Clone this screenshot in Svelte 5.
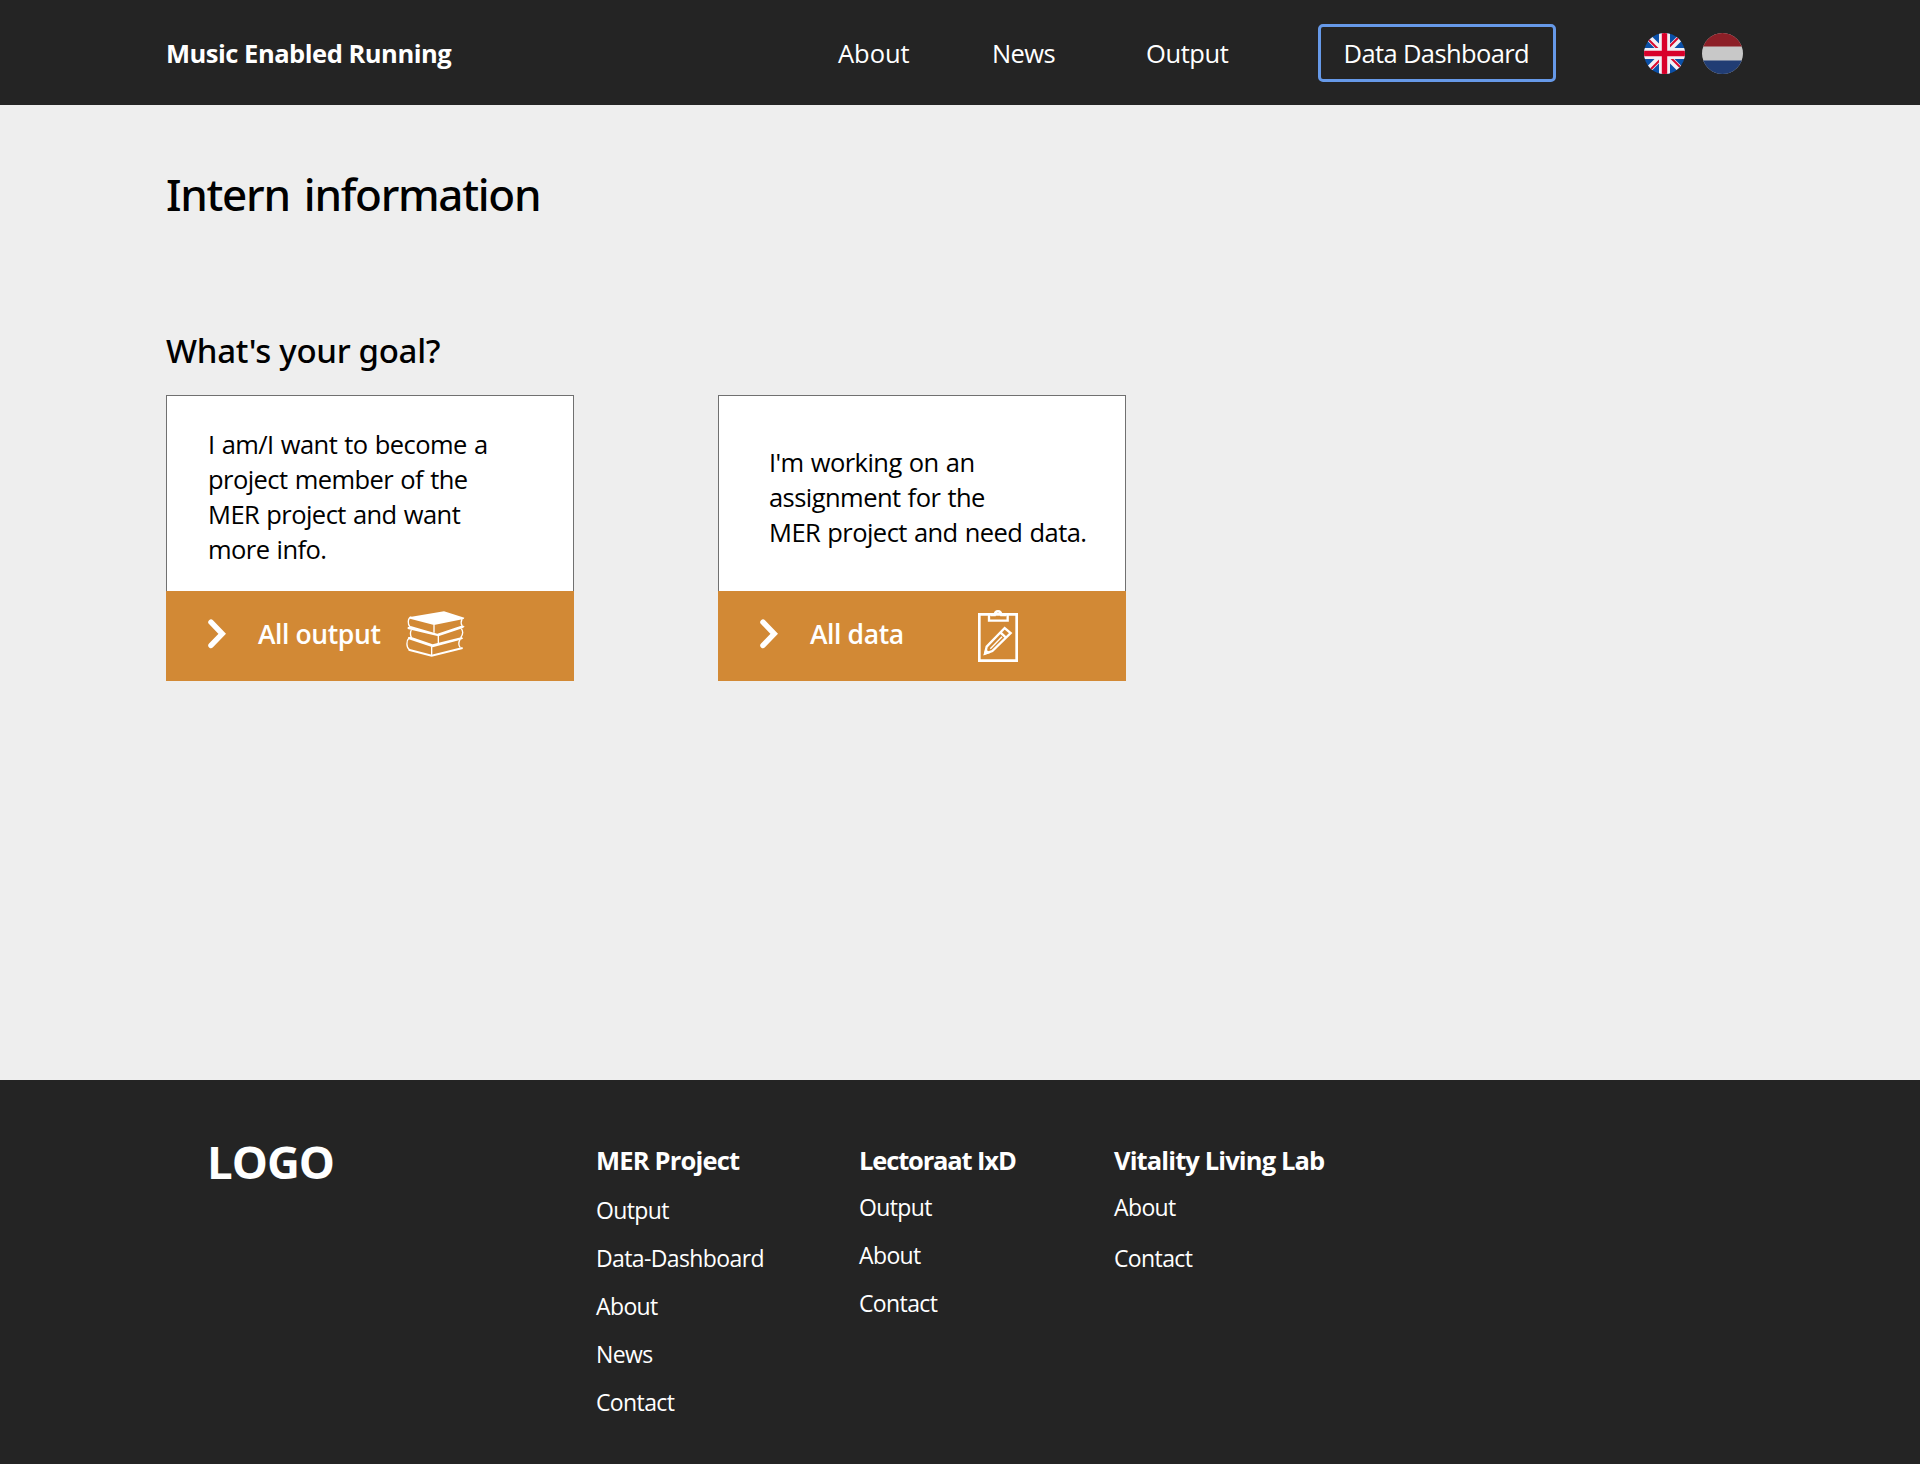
<script>
  const nav = [
    { label: 'About', cls: 'about' },
    { label: 'News', cls: 'news' },
    { label: 'Output', cls: 'output' }
  ];

  const columns = [
    { title: 'MER Project', cls: 'mer', links: ['Output', 'Data-Dashboard', 'About', 'News', 'Contact'] },
    { title: 'Lectoraat IxD', cls: 'lectoraat', links: ['Output', 'About', 'Contact'] },
    { title: 'Vitality Living Lab', cls: 'vitality', links: ['About', 'Contact'] }
  ];
</script>

{#snippet chevron()}
  <svg class="chevron" viewBox="0 0 18 30" aria-hidden="true">
    <path d="M3 3.2 14.2 14.8 3 26.4" />
  </svg>
{/snippet}

<div class="page">
  <header>
    <a class="brand" href="#home">Music Enabled Running</a>
    {#each nav as item}
      <a class="nav {item.cls}" href="#{item.cls}">{item.label}</a>
    {/each}
    <a class="dashboard" href="#dashboard">Data Dashboard</a>
    <div class="flags">
      <svg viewBox="0 0 41 41" aria-label="English">
        <clipPath id="uk"><circle cx="20.5" cy="20.5" r="20.5" /></clipPath>
        <g clip-path="url(#uk)">
          <rect width="41" height="41" fill="#0b50a8" />
          <path d="M3 3 38 38M38 3 3 38" stroke="#f2f0f5" stroke-width="6.2" />
          <path d="M2 4 19 21M37 2 20 19M39 37 22 20M4 39 21 22" stroke="#d80a2e" stroke-width="2" />
          <path d="M20.5 0V41M0 20.5H41" stroke="#f2f0f5" stroke-width="11" />
          <path d="M20.5 0V41M0 20.5H41" stroke="#d8002a" stroke-width="5.4" />
        </g>
      </svg>
      <svg viewBox="0 0 41 41" aria-label="Nederlands">
        <clipPath id="nl"><circle cx="20.5" cy="20.5" r="20.5" /></clipPath>
        <g clip-path="url(#nl)">
          <rect width="41" height="41" fill="#c8c8c8" />
          <rect width="41" height="13.5" fill="#8c1f27" />
          <rect y="27.5" width="41" height="13.5" fill="#213d74" />
        </g>
      </svg>
    </div>
  </header>

  <main>
    <h1>Intern information</h1>
    <h2>What's your goal?</h2>
    <div class="cards">
      <a class="card" href="#all-output">
        <p class="member">I am/I want to become a<br />project member of the<br />MER project and want<br />more info.</p>
        <div class="bar">
          {@render chevron()}
          <span class="action">All output</span>
          <svg class="books" viewBox="45 27 180 150" aria-hidden="true">
            <path class="fill" d="M60 51 162 34 223 53 221 57 132 75 60 56Z" />
            <path d="M64 51C52 54 53 74 60 80M132 74V98M216 57C213 64 213 72 216 77" />
            <path class="fill" d="M53 82 62 78 142 101 218 76 224 80 217 85 145 109 53 87Z" />
            <path d="M64 90C60 97 61 105 64 112M145 106V132M214 86C220 94 218 105 212 113" />
            <path class="fill" d="M54 112 62 110 128 133 216 111 219 116 212 119 128 142 54 117Z" />
            <path d="M57 114C48 122 49 143 58 149M125 139V167M210 118C206 126 206 137 211 143" />
            <path class="bottom" d="M56 149 125 167 218 144" />
          </svg>
        </div>
      </a>
      <a class="card" href="#all-data">
        <p class="assignment">I'm working on an<br />assignment for the<br />MER project and need data.</p>
        <div class="bar">
          {@render chevron()}
          <span class="action">All data</span>
          <svg class="clipboard" viewBox="51 27 126 162" aria-hidden="true">
            <path class="frame" d="M58 43H170V182H58Z" />
            <path class="clip" d="M87 43V62H143V43M92 45H104C105 30 123 30 124 45H138" />
            <path class="pencil" d="M75 161 80 140 134 84 152 99 97 153ZM121 97 138 113" />
            <path class="fill" d="M71 165 76 146 91 159Z" />
            <path class="grain" d="M91 146 126 110" />
          </svg>
        </div>
      </a>
    </div>
  </main>

  <footer>
    <div class="logo">LOGO</div>
    {#each columns as column}
      <section class={column.cls}>
        <h3>{column.title}</h3>
        <ul>
          {#each column.links as link}
            <li><a href="#{column.cls}-{link}">{link}</a></li>
          {/each}
        </ul>
      </section>
    {/each}
  </footer>
</div>

<style>
  :global(body) {
    background: #eeeeee;
  }

  .page {
    display: flex;
    flex-direction: column;
    min-height: 1464px;
    font-family: 'Open Sans', 'Noto Sans', sans-serif;
    font-size: 25.5px;
    color: #000;
  }

  a {
    color: inherit;
    text-decoration: none;
  }

  header {
    box-sizing: border-box;
    height: 105px;
    padding-left: 166px;
    display: grid;
    grid-template-columns: 672px 154px 154px 172px 326px auto;
    align-items: center;
    background: #242424;
    color: #fff;
    white-space: nowrap;
  }

  .brand {
    font-weight: 700;
    letter-spacing: -0.48px;
  }

  .nav {
    letter-spacing: -0.4px;
  }

  .nav.about {
    letter-spacing: -0.05px;
  }

  .nav.news {
    letter-spacing: -0.6px;
  }

  .dashboard {
    box-sizing: border-box;
    width: 238px;
    height: 58px;
    margin-top: 1px;
    border: 3px solid #6699e8;
    border-radius: 5px;
    line-height: 53px;
    padding-left: 22.5px;
    letter-spacing: -0.62px;
  }

  .flags {
    display: flex;
    gap: 17px;
    padding-top: 2px;
  }

  .flags svg {
    width: 41px;
    height: 41px;
  }

  main {
    box-sizing: border-box;
    height: 975px;
    padding: 59px 166px 0;
  }

  h1,
  h2 {
    margin: 0;
    font-family: 'Noto Sans', 'Open Sans', sans-serif;
    font-weight: 500;
  }

  h1 {
    font-size: 44px;
    line-height: 60px;
    letter-spacing: -1.3px;
    word-spacing: 4px;
  }

  h2 {
    margin-top: 105px;
    font-size: 33px;
    line-height: 44px;
    letter-spacing: -0.3px;
  }

  .cards {
    display: flex;
    gap: 144px;
    margin-top: 22px;
  }

  .card {
    width: 408px;
  }

  p {
    box-sizing: border-box;
    height: 196px;
    margin: 0;
    border: 1px solid #707070;
    border-bottom: 0;
    background: #fff;
    line-height: 35px;
    letter-spacing: -0.55px;
    word-spacing: 1px;
    white-space: nowrap;
  }

  .member {
    padding: 31px 0 0 41px;
  }

  .assignment {
    padding: 49px 0 0 50px;
  }

  .bar {
    height: 90px;
    display: grid;
    grid-template-columns: 50px auto auto;
    justify-content: start;
    align-items: center;
    padding-left: 42px;
    background: #d28935;
    color: #fff;
  }

  .chevron {
    width: 18px;
    height: 30px;
    margin-bottom: 5px;
    fill: none;
    stroke: #fff;
    stroke-width: 5.5;
    stroke-linecap: round;
    stroke-linejoin: miter;
  }

  .action {
    padding-bottom: 5px;
    font-size: 26.5px;
    font-weight: 600;
    letter-spacing: -0.4px;
  }

  .books {
    width: 60px;
    height: 50px;
    margin: 0 0 4px 25px;
    fill: none;
    stroke: #fff;
    stroke-width: 4;
  }

  .bottom {
    stroke-width: 6;
  }

  .clipboard {
    width: 42px;
    height: 54px;
    margin-left: 73px;
    fill: none;
    stroke: #fff;
    stroke-width: 8;
  }

  .clip,
  .pencil {
    stroke-width: 7;
  }

  .grain {
    stroke-width: 4;
  }

  .fill {
    fill: #fff;
    stroke: none;
  }

  footer {
    flex: 1;
    box-sizing: border-box;
    display: grid;
    grid-template-columns: 389px 263px 255px auto;
    align-items: start;
    justify-content: start;
    padding: 51px 0 0 207px;
    background: #242424;
    color: #fff;
    white-space: nowrap;
  }

  .logo {
    font-size: 45.5px;
    font-weight: 700;
    line-height: 60px;
    letter-spacing: -1px;
  }

  section {
    padding-top: 11px;
  }

  h3 {
    margin: 0;
    font-size: 25.5px;
    font-weight: 700;
    line-height: 36px;
    letter-spacing: -0.8px;
  }

  .lectoraat h3 {
    letter-spacing: -1.15px;
  }

  .vitality h3 {
    letter-spacing: -0.87px;
  }

  ul {
    margin: 8px 0 0;
    padding: 0;
    list-style: none;
    font-size: 23px;
    line-height: 48px;
    letter-spacing: -0.62px;
  }

  .lectoraat ul,
  .vitality ul {
    margin-top: 5px;
  }

  .vitality ul {
    display: grid;
    gap: 3px;
  }
</style>
